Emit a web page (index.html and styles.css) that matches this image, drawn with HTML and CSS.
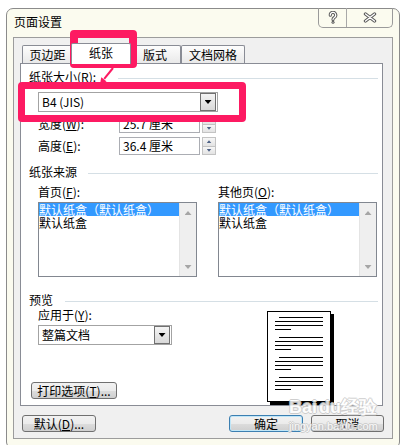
FILE: index.html
```html
<!DOCTYPE html>
<html>
<head>
<meta charset="utf-8">
<link rel="stylesheet" href="styles.css">
</head>
<body>
<div class="window">
  <div class="titlebar">
    <div class="title">页面设置</div>
    <div class="caption">
      <div class="cap-btn cap-help">
        <svg width="10" height="13" viewBox="0 0 10 13">
          <path d="M2.3 4.2 A2.7 2.7 0 1 1 6.4 6.4 C5.4 7 5 7.5 5 8.6" fill="none" stroke="#5b5b5b" stroke-width="3.2" stroke-linecap="round"/>
          <circle cx="5" cy="11.2" r="1.5" fill="#5b5b5b"/>
          <path d="M2.3 4.2 A2.7 2.7 0 1 1 6.4 6.4 C5.4 7 5 7.5 5 8.6" fill="none" stroke="#fff" stroke-width="1.2" stroke-linecap="round"/>
          <circle cx="5" cy="11.2" r="0.5" fill="#fff"/>
        </svg>
      </div>
      <div class="cap-btn cap-close">
        <svg width="14" height="11" viewBox="0 0 14 11">
          <path d="M2.5 2 L11.5 9 M11.5 2 L2.5 9" fill="none" stroke="#5b5b5b" stroke-width="3.4" stroke-linecap="round"/>
          <path d="M2.5 2 L11.5 9 M11.5 2 L2.5 9" fill="none" stroke="#fff" stroke-width="1.3" stroke-linecap="round"/>
        </svg>
      </div>
    </div>
  </div>
  <div class="client">
    <div class="tabs">
      <div class="tab t1">页边距</div>
      <div class="tab active t2">纸张</div>
      <div class="tab t3">版式</div>
      <div class="tab t4">文档网格</div>
    </div>
    <div class="panel">
      <div class="group-head head1"><span class="lbl">纸张大小(<u>R</u>):</span><i class="rule"></i></div>
      <div class="combo combo-size"><span class="combo-text">B4 (JIS)</span><span class="drop"><i class="tri"></i></span></div>
      <div class="dim-row r-w">
        <span class="dim-label">宽度(<u>W</u>):</span>
        <div class="edit">25.7 厘米</div>
        <div class="spin"><span class="up"><i class="sp-up"></i></span><span class="down"><i class="sp-down"></i></span></div>
      </div>
      <div class="dim-row r-h">
        <span class="dim-label">高度(<u>E</u>):</span>
        <div class="edit">36.4 厘米</div>
        <div class="spin"><span class="up"><i class="sp-up"></i></span><span class="down"><i class="sp-down"></i></span></div>
      </div>
      <div class="group-head head2"><span class="lbl">纸张来源</span><i class="rule"></i></div>
      <div class="sources">
        <div class="src">
          <div class="src-label">首页(<u>F</u>):</div>
          <div class="listbox">
            <div class="items">
              <div class="item sel">默认纸盒（默认纸盒）</div>
              <div class="item">默认纸盒</div>
            </div>
            <div class="sb"><i class="sb-up"></i><i class="sb-down"></i></div>
          </div>
        </div>
        <div class="src">
          <div class="src-label">其他页(<u>O</u>):</div>
          <div class="listbox">
            <div class="items">
              <div class="item sel">默认纸盒（默认纸盒）</div>
              <div class="item">默认纸盒</div>
            </div>
            <div class="sb"><i class="sb-up"></i><i class="sb-down"></i></div>
          </div>
        </div>
      </div>
      <div class="group-head head3"><span class="lbl">预览</span><i class="rule"></i></div>
      <div class="preview">
        <div class="pv-left">
          <div class="pv-label">应用于(<u>Y</u>):</div>
          <div class="combo combo-apply"><span class="combo-text">整篇文档</span><span class="drop"><i class="tri"></i></span></div>
          <div class="btn btn-print">打印选项(<u>T</u>)...</div>
        </div>
        <svg class="page" width="67" height="94" viewBox="0 0 67 94">
          <rect x="3" y="3" width="64" height="91" fill="#000"/>
          <rect x="0.5" y="0.5" width="63" height="90" fill="#fff" stroke="#000"/>
          <g stroke="#000" stroke-width="1">
            <path d="M12 6.5H56M8 10.5H56M8 14.5H56M8 18.5H24"/>
            <path d="M12 26.5H56M8 30.5H56M8 34.5H56M8 38.5H24"/>
            <path d="M12 46.5H56M8 50.5H56M8 54.5H56M8 58.5H24"/>
            <path d="M12 66.5H56M8 70.5H56M8 74.5H56M8 78.5H24"/>
          </g>
        </svg>
      </div>
    </div>
    <div class="footer">
      <div class="btn btn-default">默认(<u>D</u>)...</div>
      <div class="btn btn-ok">确定</div>
      <div class="btn btn-cancel">取消</div>
    </div>
  </div>
</div>
<div class="mark mark-tab"></div>
<div class="mark mark-size"></div>
<svg class="mark-arrow" width="22" height="22" viewBox="0 0 22 22">
  <path d="M17 4 L8.2 14.8" stroke="#fd1a62" stroke-width="2" fill="none"/>
  <polygon points="4,20 5.3,13.2 10.6,17.4" fill="#fd1a62"/>
</svg>
<div class="wm">
  <div class="wm-big">Bai<span class="wm-du">du</span>经验</div>
  <div class="wm-small">jingyan.baidu.com</div>
</div>
</body>
</html>
```

FILE: styles.css
```css
html, body {
  margin: 0;
  padding: 0;
  overflow: hidden;
  background: #fff;
}
body {
  width: 407px;
  height: 445px;
  font-family: "Noto Sans CJK SC", "Liberation Sans", sans-serif;
  font-size: 12px;
  color: #000;
}
u { text-decoration: underline; text-underline-offset: 1px; }

.window {
  margin: 8px 0 0 6px;
  width: 394px;
  height: 440px;
  box-sizing: border-box;
  border: 1px solid #8b8b8b;
  border-radius: 7px 7px 6px 6px;
  background: #fbfbef;
}
.titlebar {
  display: flex;
  justify-content: space-between;
  align-items: flex-start;
  height: 28px;
}
.title {
  padding-left: 7px;
  margin-top: 6px;
  line-height: 14px;
}
.caption {
  display: flex;
  margin: -1px 6px 0 0;
  width: 75px;
  height: 20px;
  box-sizing: border-box;
  border: 1px solid #9a9a9a;
  border-top: none;
  border-radius: 0 0 5px 5px;
}
.cap-btn {
  display: flex;
  align-items: center;
  justify-content: center;
}
.cap-help { width: 27px; border-right: 1px solid #a8a8a8; }
.cap-close { flex: 1; }

.client {
  margin: 0 6px;
  height: 402px;
  box-sizing: border-box;
  border: 1px solid #9c9c9c;
  background: #f0f0f0;
  padding-top: 5px;
}
.tabs {
  display: flex;
  align-items: flex-end;
  height: 20px;
  margin-left: 8px;
}
.tab {
  box-sizing: border-box;
  height: 18px;
  border: 1px solid #898c95;
  border-bottom: none;
  border-radius: 2px 2px 0 0;
  background: linear-gradient(#fdfdfd, #e9e9e9);
  text-align: center;
  line-height: 17px;
}
.t1 { width: 51px; }
.t2 { width: 60px; }
.t3 { width: 52px; }
.t4 { width: 64px; }
.tab.active {
  height: 21px;
  margin: 0 -2px -1px;
  background: #fff;
  position: relative;
  z-index: 1;
  line-height: 18px;
}

.panel {
  margin-left: 6px;
  width: 363px;
  height: 343px;
  box-sizing: border-box;
  border: 1px solid #898c95;
  background: #fff;
  padding: 6px 4px 0 8px;
}
.group-head {
  display: flex;
  align-items: center;
  height: 14px;
  line-height: 14px;
}
.lbl { flex: none; }
.head1 .lbl { width: 89px; }
.head2 .lbl { width: 59px; }
.head3 .lbl { width: 36px; }
.head2 { margin-top: 10px; }
.head3 { margin-top: 16px; }
.rule {
  flex: 1;
  height: 1px;
  background: #d5dfe5;
  margin-top: 2px;
}

.combo {
  display: flex;
  align-items: center;
  box-sizing: border-box;
  height: 20px;
  border: 1px solid #a3a3a3;
  background: #fff;
  margin-left: 9px;
  padding-left: 3px;
}
.combo-size { width: 180px; margin-top: 8px; }
.combo-apply { width: 134px; margin-top: 3px; }
.combo-text { flex: 1; line-height: 18px; }
.drop {
  width: 16px;
  height: 18px;
  margin-right: 1px;
  box-sizing: border-box;
  border: 1px solid #707070;
  background: linear-gradient(#f4f4f4, #d9d9d9);
  display: flex;
  align-items: center;
  justify-content: center;
}
.tri {
  width: 7px;
  height: 4px;
  background: #000;
  clip-path: polygon(0 0, 100% 0, 50% 100%);
}

.dim-row {
  display: flex;
  align-items: center;
  margin-left: 9px;
  height: 18px;
}
.r-w { margin-top: 3px; }
.r-h { margin-top: 4px; }
.dim-label { width: 81px; line-height: 14px; }
.edit {
  box-sizing: border-box;
  width: 81px;
  height: 18px;
  border: 1px solid #abadb3;
  padding-left: 3px;
  line-height: 16px;
}
.spin {
  margin-left: 2px;
  width: 14px;
  height: 18px;
  display: flex;
  flex-direction: column;
}
.spin span {
  flex: 1;
  border: 1px solid #c3c3c3;
  background: linear-gradient(#f7f7f7, #e3e3e3);
  display: flex;
  align-items: center;
  justify-content: center;
}
.spin .down { border-top: none; }
.sp-up, .sp-down {
  width: 5px;
  height: 3px;
  background: #4d6185;
}
.sp-up { clip-path: polygon(50% 0, 100% 100%, 0 100%); }
.sp-down { clip-path: polygon(0 0, 100% 0, 50% 100%); }

.sources {
  display: grid;
  grid-template-columns: 159px 159px;
  column-gap: 21px;
  margin: 6px 0 0 9px;
}
.src-label { height: 14px; line-height: 14px; }
.listbox {
  margin-top: 3px;
  height: 75px;
  box-sizing: border-box;
  border: 1px solid #828790;
  background: #fff;
  display: flex;
}
.items { flex: 1; line-height: 13px; }
.item { height: 13px; white-space: nowrap; }
.item.sel { background: #3399ff; color: #fff; }
.sb {
  width: 17px;
  background: #efefef;
  border-left: 1px solid #e4e4e4;
  box-sizing: border-box;
  display: flex;
  flex-direction: column;
  justify-content: space-between;
  align-items: center;
  padding: 8px 0 7px;
}
.sb-up, .sb-down {
  width: 7px;
  height: 4px;
  background: #a6a6a6;
}
.sb-up { clip-path: polygon(50% 0, 100% 100%, 0 100%); }
.sb-down { clip-path: polygon(0 0, 100% 0, 50% 100%); }

.preview { display: flex; align-items: flex-start; }
.pv-left { flex: none; }
.pv-label { margin: 1px 0 0 9px; line-height: 14px; height: 14px; }
.page { display: block; margin: 4px 44px 0 auto; }

.btn {
  box-sizing: border-box;
  height: 17px;
  width: 74px;
  border: 1px solid #707070;
  border-radius: 3px;
  background: linear-gradient(#f2f2f2 0, #ebebeb 50%, #dddddd 50%, #cfcfcf 100%);
  text-align: center;
  line-height: 15px;
  white-space: nowrap;
}
.btn-print { margin: 37px 0 0 2px; width: 86px; }
.footer {
  display: flex;
  margin-top: 9px;
  padding: 0 8px;
}
.btn-ok {
  margin-left: auto;
  border-color: #3c7fb1;
  box-shadow: inset 0 0 0 1px #bfe6f8;
}
.btn-cancel { margin-left: 8px; width: 73px; }

.mark {
  position: absolute;
  box-sizing: border-box;
  border: 8px solid #fd1a62;
  border-radius: 4px;
}
.mark-tab { left: 70px; top: 30px; width: 67px; height: 38px; }
.mark-size { left: 18px; top: 82px; width: 228px; height: 40px; border-width: 7px; }
.mark-arrow { position: absolute; left: 96px; top: 64px; }

.wm {
  position: absolute;
  left: 289px;
  top: 397px;
  color: #fff;
  opacity: 0.85;
  font-family: "Liberation Sans", sans-serif;
  text-shadow: 1px 0 #c6c6c6, -1px 0 #c6c6c6, 0 1px #c6c6c6, 0 -1px #c6c6c6;
}
.wm-big { font-size: 18px; font-weight: bold; line-height: 20px; }
.wm-du { margin-left: 2px; }
.wm-small { font-size: 11px; line-height: 12px; margin-top: 3px; }
```
